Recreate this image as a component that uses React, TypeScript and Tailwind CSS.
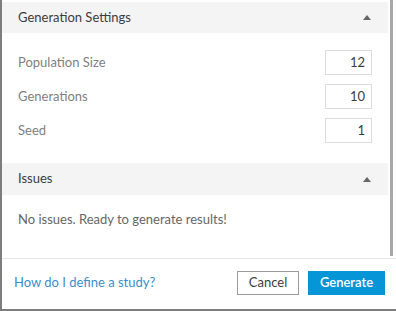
export default function App() {
  return (
    <main className="flex h-[311px] w-[396px] flex-col border-b-2 border-l-2 border-[#7d7d7d] bg-white font-['Lato',sans-serif] text-[13px]">
      <div className="flex h-[258px] shrink-0">
        <div className="flex w-[386px] flex-col pt-[2px]">
          <SectionHeader title="Generation Settings" height="h-[31px]" />
          <div className="flex flex-col gap-[9px] pb-[20px] pl-[16px] pr-[16px] pt-[17px]">
            <Field label="Population Size" value="12" />
            <Field label="Generations" value="10" />
            <Field label="Seed" value="1" />
          </div>
          <SectionHeader title="Issues" height="h-[32px]" />
          <p className="pl-[16px] pt-[15px] text-[#666]">No issues. Ready to generate results!</p>
        </div>
        <div className="ml-[2px] h-[256px] w-[3px] bg-[#a8a8a8]" />
      </div>
      <div className="h-px bg-[#e6e6e6]" />
      <div className="flex flex-1 items-center justify-between pb-[2px] pl-[12px] pr-[11px]">
        <a href="#" className="text-[#3a8fca]">How do I define a study?</a>
        <div className="flex gap-[9px]">
          <button className="h-[24px] w-[62px] border border-[#9a9a9a] bg-white text-[#3c3c3c]">Cancel</button>
          <button className="h-[24px] w-[77px] bg-[#0696d7] font-semibold text-white">Generate</button>
        </div>
      </div>
    </main>
  );
}

function SectionHeader({ title, height }: { title: string; height: string }) {
  return (
    <div className={`flex ${height} items-center justify-between bg-[#f4f4f4] pl-[16px] pr-[16px] text-[#3c3c3c]`}>
      <span>{title}</span>
      <svg width="8" height="5" viewBox="0 0 8 5" className="mr-[1px]">
        <path d="M4 0 L8 5 L0 5 Z" fill="#666" />
      </svg>
    </div>
  );
}

function Field({ label, value }: { label: string; value: string }) {
  return (
    <div className="flex h-[25px] items-center justify-between">
      <span className="text-[#808080]">{label}</span>
      <div className="flex h-[25px] w-[47px] items-center justify-end border border-[#dcdcdc] pr-[6px] text-[#3c3c3c]">
        {value}
      </div>
    </div>
  );
}
